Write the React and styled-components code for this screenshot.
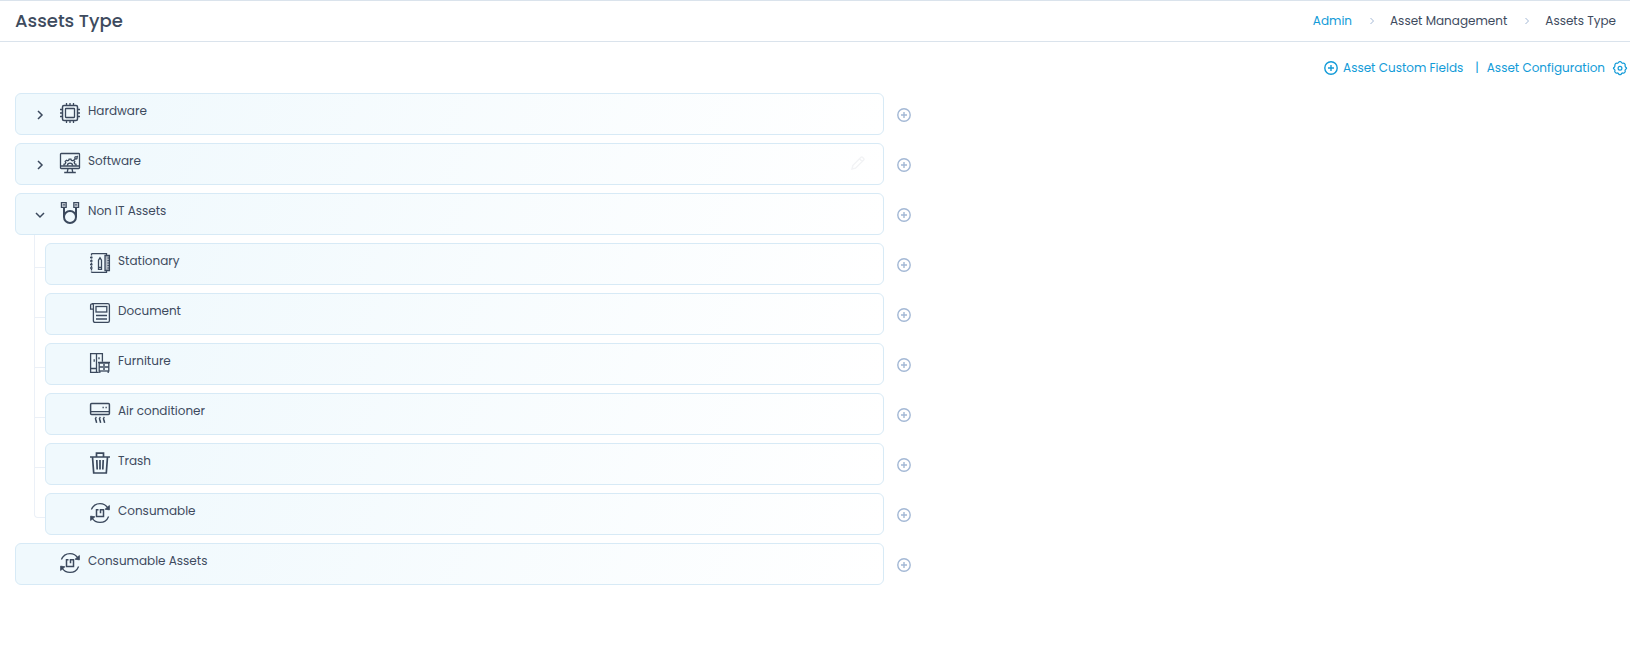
import { useState } from "react";
import styled, { createGlobalStyle, css, ThemeProvider } from "styled-components";

const theme = {
  COLORS: {
    text: "#3e4b5e",
    icon: "#3b495d",
    link: "#129bd8",
    line: "#dae3ec",
    rowLine: "#d7eaf6",
    branch: "#ebf0f7",
    muted: "#a3b8d5",
    faint: "#f2f3f5",
  },
};

const ASSETS = [
  { name: "Hardware", icon: "chip", expandable: true },
  { name: "Software", icon: "monitor", expandable: true, editable: true },
  {
    name: "Non IT Assets",
    icon: "cable",
    expandable: true,
    items: [
      { name: "Stationary", icon: "stationery" },
      { name: "Document", icon: "document" },
      { name: "Furniture", icon: "furniture" },
      { name: "Air conditioner", icon: "conditioner" },
      { name: "Trash", icon: "trash" },
      { name: "Consumable", icon: "consumable" },
    ],
  },
  { name: "Consumable Assets", icon: "consumable" },
];

const ICONS = {
  chip: (
    <>
      <rect x="2.5" y="2.5" width="15" height="15" rx="1.5" strokeWidth="1.5" />
      <rect x="5.5" y="5.5" width="9" height="9" rx="0.5" />
      <path d="M6.5 0v2.5M10 0v2.5M13.5 0v2.5M6.5 17.5V20M10 17.5V20M13.5 17.5V20M0 6.5h2.5M0 10h2.5M0 13.5h2.5M17.5 6.5H20M17.5 10H20M17.5 13.5H20" />
    </>
  ),
  monitor: (
    <g strokeWidth="1.3">
      <rect x="0.5" y="0.5" width="19" height="15" rx="0.8" />
      <path d="M0.5 13h19M8 15.5l-.8 4M12 15.5l.8 4M4.2 19.5h11.6" />
      <path d="M4 12.8v-1.5l1.3-.5.5-1.2-.6-1.2 1.3-1.2 1.2.6 1-.5.4-1.2h1.8l.4 1.2 1 .5 1.2-.6 1.3 1.2-.6 1.2.5 1.2 1.3.5v1.5" />
      <path d="M7.4 12.8a2.6 2.6 0 0 1 5.2 0" />
      <circle cx="16" cy="4.8" r="1.2" />
      <path d="M14 6.8l1-.9M17 3.8l.8-.8" />
    </g>
  ),
  cable: (
    <>
      <g strokeWidth="1.2">
        <path d="M1.4-.5h4.8v5H1.4zM13.8-.5h4.8v5h-4.8z" fill="#b4bcc6" />
        <path d="M4 1v1.5M16 1v1.5" />
      </g>
      <path d="M4 4.5V14a6 6 0 0 0 12 0V4.5" strokeWidth="2" />
      <path d="M4 14a6 6 0 0 1 12 0" strokeWidth="2" />
    </>
  ),
  stationery: (
    <>
      <path d="M1.5 .6h15v18.8h-15" />
      <path d="M1.5 .6v18.8" strokeDasharray="2 1" />
      <path d="M0 4.5h2.5M0 8h2.5M0 11.5h2.5M0 15h2.5" />
      <path d="M8.5 16.3V7.2L10 4.8l1.5 2.4v9.1zM8.5 14.3h3" />
      <path d="M15 2.5h4.4v15H15z" fill="#b4bcc6" />
      <path d="M17.4 5h2M17.4 7.5h2M17.4 10h2M17.4 12.5h2M17.4 15h2" strokeWidth="0.9" />
    </>
  ),
  document: (
    <>
      <path d="M2.2.6h15.6c1 0 1.6.6 1.6 1.6v15.6c0 1-.6 1.6-1.6 1.6H5c-1 0-1.6-.6-1.6-1.6V2.2A1.4 1.4 0 0 0 .6 2.2v3.9h2.8" />
      <rect x="6" y="3.5" width="10.8" height="5.5" />
      <path d="M6 12.5h11M6 16h11" />
    </>
  ),
  furniture: (
    <g strokeWidth="1.3">
      <path d="M8.8 19.4H.6V.6h11.8v8.2M6.5.6v18.8M.6 15.5h6" />
      <path d="M4.2 6.3v2.4M9 4.2v2" />
      <rect x="9.2" y="10" width="9.6" height="8" />
      <path d="M8 9.5h12M9.2 14h9.6M9.8 18v1.9M18.2 18v1.9M13 12h2M13 16h2" />
    </g>
  ),
  conditioner: (
    <>
      <rect x="0.6" y="0.6" width="18.8" height="11" rx="1" strokeWidth="1.5" />
      <path d="M.6 8.6h18.8M12.5 4.5h1.3M15.5 4.5h1.3" />
      <path d="M6.4 14c-1.4 1.4-1.2 2.1-.6 3 .5.8.5 1.5.8 2.8M10.4 14c-1.4 1.4-1.2 2.1-.6 3 .5.8.5 1.5.8 2.8M14.4 14c-1.4 1.4-1.2 2.1-.6 3 .5.8.5 1.5.8 2.8" strokeWidth="1.5" />
    </>
  ),
  trash: (
    <g strokeWidth="1.7">
      <path d="M0 4h20M2.5 4l1.2 16h12.6l1.2-16M6.5 3.5V.2h7v3.3" />
      <path d="M6.8 7l.4 9.5M10 7v9.5M13.2 7l-.4 9.5" />
    </g>
  ),
  consumable: (
    <>
      <path d="M1.4 6.6C3 2.6 6.3.6 10 .6c3.4 0 6.3 1.8 8 4.6M18.6 13.4c-1.6 4-4.9 6-8.6 6-3.4 0-6.3-1.8-8-4.6" />
      <path d="M19.4 2.5v4.4l-4.3-.7zM.6 17.5v-4.4l4.3.7z" fill="currentColor" strokeWidth="0.8" />
      <path d="M8.5 6.8h-2v6.7h7V6.8h-3v3.4" strokeWidth="1.5" />
    </>
  ),
};

const AssetIcon = ({ name }) => (
  <Svg20 viewBox="0 0 20 20" aria-hidden="true">
    {ICONS[name]}
  </Svg20>
);

const PlusCircle = () => (
  <Svg14 viewBox="0 0 14 14" aria-hidden="true">
    <circle cx="7" cy="7" r="6.2" />
    <path d="M7 4v6M4 7h6" />
  </Svg14>
);

const Gear = () => (
  <Svg14 viewBox="0 0 14 14" aria-hidden="true">
    <path
      d="M5.5 1.7C5.7.9 6 .6 6.5.6h1c.5 0 .8.3 1 1.1l1.2.6c.8-.3 1.3-.2 1.7.2l.7.8c.4.5.3.9-.1 1.6l.5 1.2c.8.3 1.1.6 1.1 1.1s-.3.8-1.1 1.1L12 9.6c.4.7.4 1.2 0 1.6l-.7.7c-.4.4-.9.4-1.6.1l-1.2.5c-.2.8-.5 1.1-1 1.1h-1c-.5 0-.8-.3-1-1.1l-1.2-.5c-.7.3-1.2.3-1.6-.1l-.7-.7c-.4-.4-.4-.9 0-1.6l-.5-1.3C.7 8 .4 7.7.4 7.2s.3-.8 1.1-1.1L2 4.9c-.4-.7-.4-1.2 0-1.6l.7-.8c.4-.4.9-.5 1.6-.2z"
      strokeWidth="1.2"
    />
    <circle cx="7" cy="7.2" r="1.9" strokeWidth="1.2" />
  </Svg14>
);

const AssetRow = ({ asset, open, onToggle }) => (
  <RowLine>
    <Row>
      <ToggleCell>
        {asset.expandable && (
          <IconButton
            type="button"
            aria-label={`Toggle ${asset.name}`}
            aria-expanded={open}
            onClick={onToggle}
          >
            <Chevron viewBox="0 0 12 12" $open={open} aria-hidden="true">
              <path d="M4 2l4 4-4 4" />
            </Chevron>
          </IconButton>
        )}
      </ToggleCell>
      <AssetIcon name={asset.icon} />
      <RowName>{asset.name}</RowName>
      {asset.editable && (
        <IconButton type="button" variant="faint" aria-label={`Edit ${asset.name}`}>
          <Svg14 viewBox="0 0 14 14" aria-hidden="true">
            <path d="M1 13l.8-3.5L10 1.3c.5-.5 1-.5 1.5 0l1.2 1.2c.5.5.5 1 0 1.5l-8.2 8.2zM8.5 2.8l2.7 2.7" />
          </Svg14>
        </IconButton>
      )}
    </Row>
    <IconButton type="button" variant="muted" aria-label={`Add to ${asset.name}`}>
      <PlusCircle />
    </IconButton>
  </RowLine>
);

const App = () => {
  const [opened, setOpened] = useState(["Non IT Assets"]);

  const toggle = (name) => {
    setOpened((prev) =>
      prev.includes(name) ? prev.filter((n) => n !== name) : [...prev, name]
    );
  };

  return (
    <ThemeProvider theme={theme}>
      <GlobalStyle />
      <Header>
        <Title>Assets Type</Title>
        <Breadcrumb aria-label="Breadcrumb">
          <Link href="#admin">Admin</Link>
          <Separator viewBox="0 0 4 8" aria-hidden="true">
            <path d="M.5 1l3 3-3 3" />
          </Separator>
          <span>Asset Management</span>
          <Separator viewBox="0 0 4 8" aria-hidden="true">
            <path d="M.5 1l3 3-3 3" />
          </Separator>
          <span>Assets Type</span>
        </Breadcrumb>
      </Header>
      <Toolbar>
        <Link href="#fields">
          <PlusCircle />
          Asset Custom Fields
        </Link>
        <Divider>|</Divider>
        <Link href="#configuration" size="wide">
          Asset Configuration
          <Gear />
        </Link>
      </Toolbar>
      <Tree>
        {ASSETS.map((asset) => {
          const open = opened.includes(asset.name);
          return (
            <li key={asset.name}>
              <AssetRow
                asset={asset}
                open={open}
                onToggle={() => toggle(asset.name)}
              />
              {open && asset.items && (
                <Branch>
                  {asset.items.map((item) => (
                    <BranchItem key={item.name}>
                      <Connector>
                        <Elbow />
                      </Connector>
                      <AssetRow asset={item} />
                    </BranchItem>
                  ))}
                </Branch>
              )}
            </li>
          );
        })}
      </Tree>
    </ThemeProvider>
  );
};

export default App;

const GlobalStyle = createGlobalStyle`
  * {
    box-sizing: border-box;
  }

  body {
    margin: 0;
    background: #fff;
    color: ${theme.COLORS.text};
    font-family: Poppins, Inter, "Liberation Sans", sans-serif;
    font-size: 12px;
    line-height: 16px;
  }
`;

const variantCSS = {
  muted: css`
    padding-top: 2px;
    color: ${({ theme }) => theme.COLORS.muted};
  `,
  faint: css`
    padding-top: 3px;
    color: ${({ theme }) => theme.COLORS.faint};
  `,
};

const strokeCSS = css`
  display: block;
  flex: none;
  overflow: visible;
  fill: none;
  stroke: currentColor;
`;

const Svg20 = styled.svg`
  ${strokeCSS}
  width: 20px;
  height: 20px;
  color: ${({ theme }) => theme.COLORS.icon};
  stroke-width: 1.3;
`;

const Svg14 = styled.svg`
  ${strokeCSS}
  width: 14px;
  height: 14px;
  stroke-width: 1.4;
`;

const Chevron = styled.svg`
  ${strokeCSS}
  width: 12px;
  height: 12px;
  stroke-width: 1.5;
  transform: rotate(${({ $open }) => ($open ? "90deg" : "0deg")});
`;

const Separator = styled.svg`
  ${strokeCSS}
  width: 4px;
  height: 8px;
  margin-left: 2px;
  color: ${({ theme }) => theme.COLORS.muted};
`;

const Header = styled.header`
  display: flex;
  align-items: center;
  justify-content: space-between;
  height: 42px;
  padding: 0 14px 0 15px;
  border: solid ${({ theme }) => theme.COLORS.line};
  border-width: 1px 0;
`;

const Title = styled.h1`
  margin: 0;
  font-size: 18px;
  font-weight: 500;
  line-height: 24px;
`;

const Breadcrumb = styled.nav`
  display: flex;
  align-items: center;
  gap: 16px;
`;

const Link = styled.a`
  display: flex;
  align-items: center;
  gap: ${({ size }) => (size === "wide" ? "8px" : "5px")};
  color: ${({ theme }) => theme.COLORS.link};
  text-decoration: none;
`;

const Toolbar = styled.div`
  display: flex;
  align-items: center;
  justify-content: flex-end;
  padding: 18px 3px 17px;
`;

const Divider = styled.span`
  margin: 0 8px 0 12px;
  color: ${({ theme }) => theme.COLORS.link};
`;

const Tree = styled.ul`
  display: flex;
  flex-direction: column;
  gap: 8px;
  width: 56%;
  margin: 0;
  padding: 0 2px 0 15px;
  list-style: none;
`;

const Branch = styled.ul`
  margin: 0;
  padding: 0 0 0 19px;
  list-style: none;
`;

const Connector = styled.div`
  flex: none;
  width: 11px;
  border-left: 1px solid ${({ theme }) => theme.COLORS.branch};
`;

const Elbow = styled.div`
  height: 33px;
  border-bottom: 1px solid ${({ theme }) => theme.COLORS.branch};
`;

const RowLine = styled.div`
  display: flex;
  flex: 1;
  align-items: center;
  gap: 13px;
`;

const BranchItem = styled.li`
  display: flex;

  ${RowLine} {
    padding-top: 8px;
  }

  &:last-child ${Connector} {
    border-left: none;
  }

  &:last-child ${Elbow} {
    border-left: 1px solid ${({ theme }) => theme.COLORS.branch};
    border-bottom-left-radius: 4px;
  }
`;

const Row = styled.div`
  display: flex;
  flex: 1;
  align-items: flex-start;
  height: 42px;
  padding: 9px 18px;
  border: 1px solid ${({ theme }) => theme.COLORS.rowLine};
  border-radius: 6px;
  background: linear-gradient(110deg, #f0f9fd 10%, #fff 100%);
`;

const ToggleCell = styled.div`
  width: 26px;
  padding-top: 6px;
`;

const RowName = styled.span`
  flex: 1;
  margin-left: 8px;
`;

const IconButton = styled.button`
  display: block;
  padding: 0;
  border: none;
  background: none;
  color: ${({ theme }) => theme.COLORS.icon};
  cursor: pointer;
  ${({ variant }) => variantCSS[variant]}
`;
